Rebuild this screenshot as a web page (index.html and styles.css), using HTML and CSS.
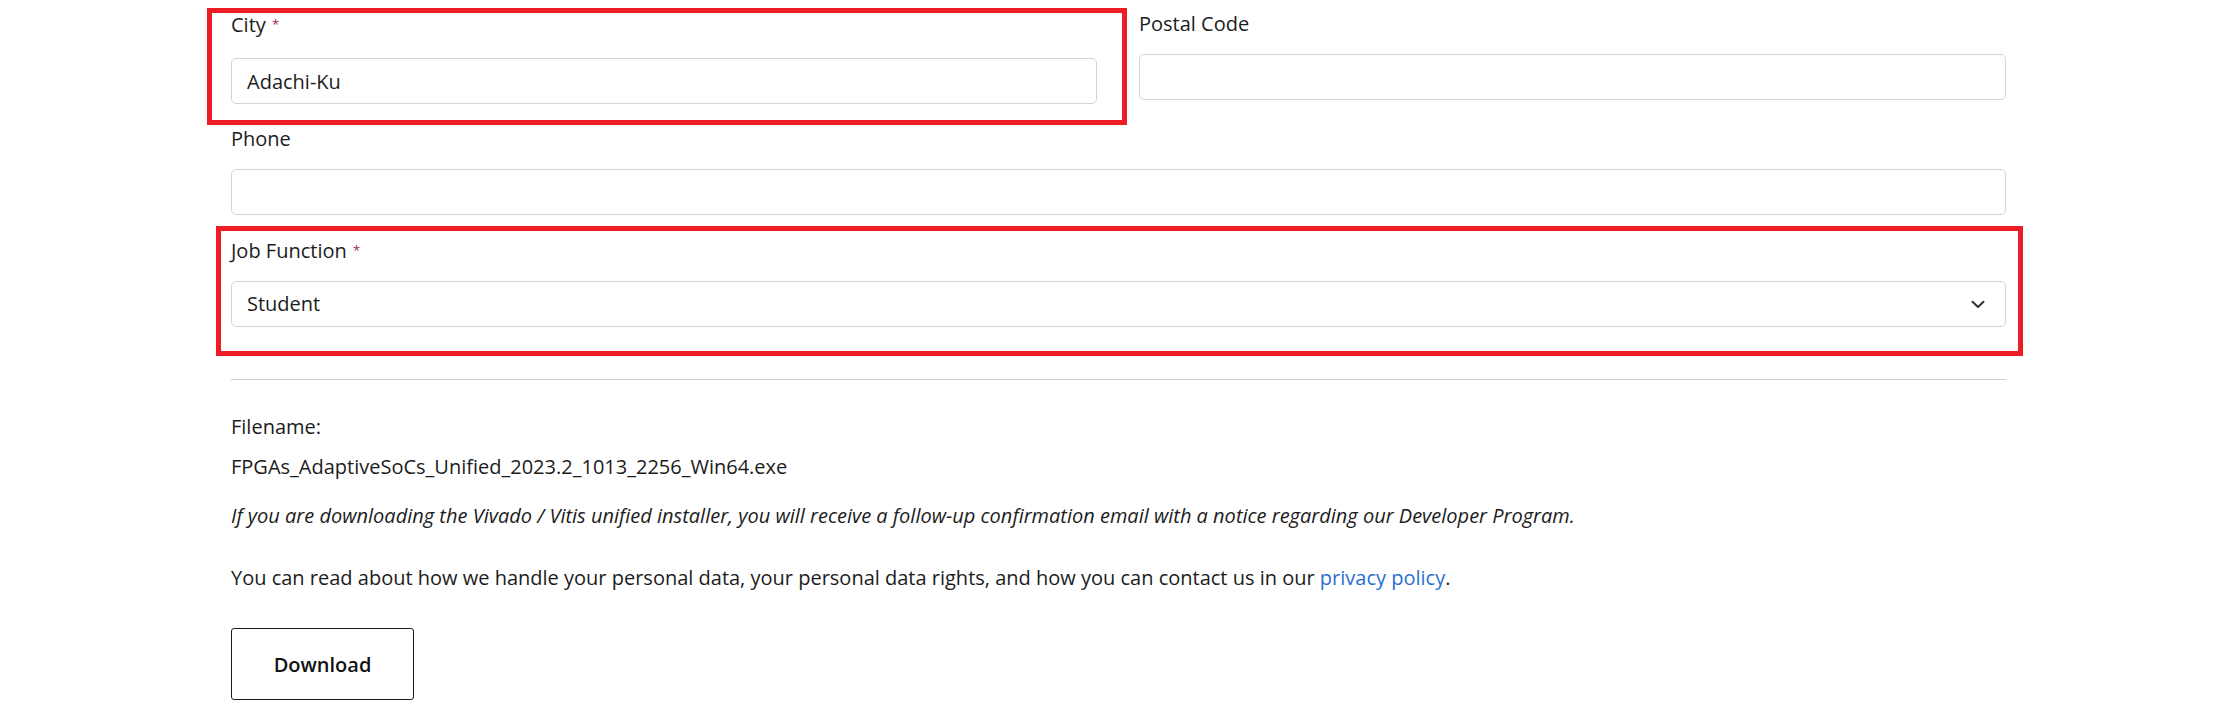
FILE: index.html
```html
<!DOCTYPE html>
<html lang="en">
<head>
<meta charset="utf-8">
<title>Download</title>
<link rel="stylesheet" href="styles.css">
</head>
<body>
<div class="page">
  <form class="form">
    <div class="row two">
      <div class="field field-city">
        <label class="label">City <span class="req">*</span></label>
        <input class="input" type="text" value="Adachi-Ku">
      </div>
      <div class="field">
        <label class="label">Postal Code</label>
        <input class="input" type="text" value="">
      </div>
    </div>
    <div class="row">
      <div class="field">
        <label class="label">Phone</label>
        <input class="input" type="text" value="">
      </div>
    </div>
    <div class="row">
      <div class="field">
        <label class="label">Job Function <span class="req">*</span></label>
        <div class="select">
          <span class="select-value">Student</span>
          <svg class="chev" width="14" height="9" viewBox="0 0 14 9"><path d="M1.5 1.8 L7 7 L12.5 1.8" fill="none" stroke="#333" stroke-width="2" stroke-linecap="round" stroke-linejoin="round"/></svg>
        </div>
      </div>
    </div>
    <hr class="divider">
    <p class="filename-label">Filename:</p>
    <p class="filename">FPGAs_AdaptiveSoCs_Unified_2023.2_1013_2256_Win64.exe</p>
    <p class="notice">If you are downloading the Vivado / Vitis unified installer, you will receive a follow-up confirmation email with a notice regarding our Developer Program.</p>
    <p class="privacy">You can read about how we handle your personal data, your personal data rights, and how you can contact us in our <a href="#" class="link">privacy policy</a>.</p>
    <button type="button" class="btn">Download</button>
  </form>
  <div class="mark mark-city"></div>
  <div class="mark mark-job"></div>
</div>
</body>
</html>
```
FILE: styles.css
```css
html, body {
  margin: 0;
  padding: 0;
  background: #ffffff;
}
body {
  font-family: "Open Sans", "Noto Sans", sans-serif;
  font-size: 20px;
  color: #1c1c1c;
}
.page {
  position: relative;
  width: 2234px;
  height: 724px;
  overflow: hidden;
}
.form {
  width: 1775px;
  margin-left: 231px;
  padding-top: 10px;
}
.row {
  margin-bottom: 21px;
}
.row.two {
  display: grid;
  grid-template-columns: 866px 867px;
  column-gap: 42px;
  align-items: start;
}
.field {
  display: flex;
  flex-direction: column;
}
.label {
  display: block;
  line-height: 28px;
  margin-bottom: 16px;
}
.field-city .label {
  margin-bottom: 19px;
}
.req {
  color: #a8184f;
  font-size: 13px;
  vertical-align: 3px;
  margin-left: 1px;
}
.input {
  box-sizing: border-box;
  height: 46px;
  width: 100%;
  border: 1px solid #d3d5d9;
  border-radius: 5px;
  padding: 0 15px;
  font-family: inherit;
  font-size: 20px;
  color: #1c1c1c;
  background: #fff;
  outline: none;
}
.select {
  box-sizing: border-box;
  height: 46px;
  border: 1px solid #d3d5d9;
  border-radius: 5px;
  padding: 0 20px 0 15px;
  display: flex;
  align-items: center;
  justify-content: space-between;
}
.select-value {
  line-height: 28px;
}
.chev {
  display: block;
}
.divider {
  border: 0;
  border-top: 1px solid #cfcfcf;
  margin: 52px 0 0;
  height: 0;
}
.filename-label,
.filename,
.notice,
.privacy {
  margin: 0;
  line-height: 28px;
}
.filename-label {
  margin-top: 33px;
}
.filename {
  margin-top: 12px;
}
.notice {
  margin-top: 21px;
  font-style: italic;
}
.privacy {
  margin-top: 34px;
}
.link {
  color: #2a6fd0;
  text-decoration: none;
}
.btn {
  display: block;
  margin-top: 36px;
  box-sizing: border-box;
  width: 183px;
  height: 72px;
  border: 1px solid #1c1c1c;
  border-radius: 3px;
  background: #fff;
  font-family: inherit;
  font-size: 20px;
  font-weight: 600;
  color: #111;
  padding: 0;
}
.mark {
  position: absolute;
  border: 5px solid #ee1c25;
  box-sizing: border-box;
  pointer-events: none;
}
.mark-city {
  left: 207px;
  top: 8px;
  width: 920px;
  height: 117px;
}
.mark-job {
  left: 216px;
  top: 226px;
  width: 1807px;
  height: 130px;
}
```
